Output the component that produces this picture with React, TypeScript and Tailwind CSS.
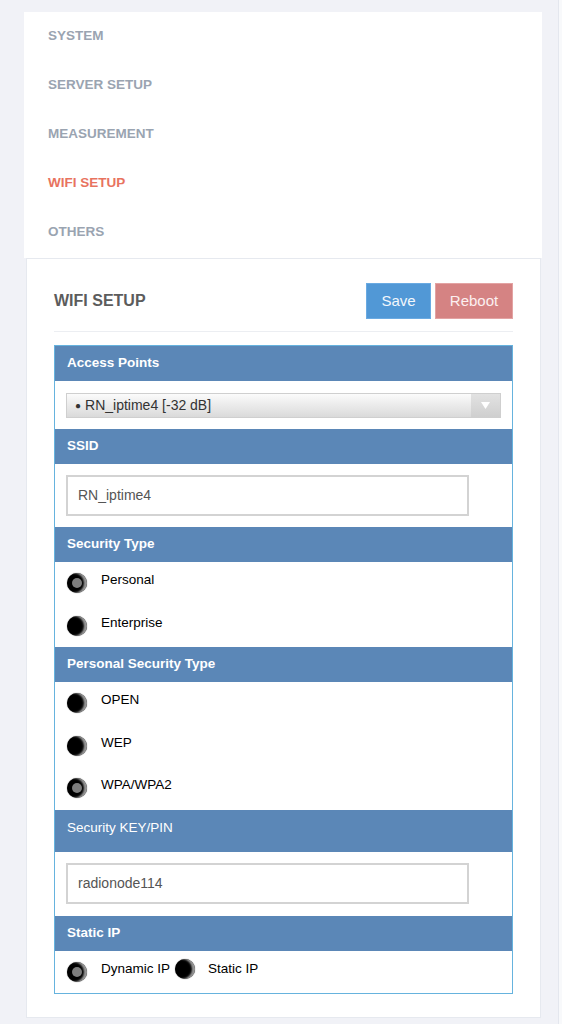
import React from 'react';

const menu = ['SYSTEM', 'SERVER SETUP', 'MEASUREMENT', 'WIFI SETUP', 'OTHERS'];

const Radio = ({ checked }: { checked?: boolean }) => (
    <span className="relative inline-block w-[20px] h-[20px] shrink-0 rounded-full bg-black shadow-[inset_-3px_0_2px_rgba(255,255,255,0.6),0_0_1px_rgba(0,0,0,0.7)]">
        {checked && <span className="absolute left-[5px] top-[5px] w-[10px] h-[10px] rounded-full bg-[#7d7d7d]" />}
    </span>
);

const Header = ({ children, light }: { children: React.ReactNode; light?: boolean }) =>
    light ? (
        <div className="h-[42px] bg-[#5b87b7] pl-[12px] pt-[8px] text-white text-[13.5px]">{children}</div>
    ) : (
        <div className="h-[35px] bg-[#5b87b7] pl-[12px] flex items-center text-white font-bold text-[13.5px]">{children}</div>
    );

const RadioRow = ({ label, checked }: { label: string; checked?: boolean }) => (
    <div className="h-[42.5px] flex items-center pl-[12px]">
        <Radio checked={checked} />
        <span className="ml-[14px] -mt-[6px] text-[13.5px] text-black">{label}</span>
    </div>
);

const TextBox = ({ value }: { value: string }) => (
    <div className="w-[403px] h-[41px] border-2 border-[#d3d3d3] bg-white flex items-center pl-[10px] text-[14px] text-[#555]">
        {value}
    </div>
);

export default function App() {
    return (
        <div className="min-h-[1024px] bg-[#f8f9fb]" style={{ fontFamily: '"Liberation Sans", Arial, sans-serif' }}>
            <div className="w-[559px] min-h-[1024px] bg-[#f1f2f7] border-r border-[#e4e7ee] pt-[12px] pl-[24px]">
                {/* Menu */}
                <div className="w-[518px] bg-white pb-[1px]">
                    {menu.map(m => (
                        <div
                            key={m}
                            className={`h-[49px] flex items-center pl-[24px] text-[13.5px] font-bold ${m === 'WIFI SETUP' ? 'text-[#e8735f]' : 'text-[#9aa4b1]'}`}
                        >
                            {m}
                        </div>
                    ))}
                </div>

                {/* WiFi setup panel */}
                <div className="ml-[2px] w-[515px] bg-white border border-[#e6e9ef] px-[27px] pt-[24px] pb-[23px]">
                    <div className="flex items-center justify-between h-[36px]">
                        <h2 className="text-[16px] font-bold text-[#5c5c5c]">WIFI SETUP</h2>
                        <div className="flex gap-[4px]">
                            <button className="w-[65px] h-[36px] bg-[#5198d6] border border-[#6aaae2] text-[15px] text-[#f2f7fc]">Save</button>
                            <button className="w-[78px] h-[36px] bg-[#d58383] border border-[#e3a3a3] text-[15px] text-[#fcf0f0]">Reboot</button>
                        </div>
                    </div>
                    <div className="mt-[12px] h-px bg-[#eceef2]" />

                    <div className="mt-[13px] border border-[#66b3de]">
                        <Header>Access Points</Header>
                        <div className="h-[48px] pt-[12px] px-[11px]">
                            <div className="relative h-[25px] border border-[#cfcfcf] bg-gradient-to-b from-[#fbfbfb] to-[#dadada] flex items-center pl-[8px] text-[14px] text-[#333]">
                                <span className="text-[10px] mr-[4px]">●</span>RN_iptime4 [-32 dB]
                                <div className="absolute right-0 top-0 bottom-0 w-[29px] bg-gradient-to-b from-[#e2e2e2] to-[#cfcfcf] flex items-center justify-center">
                                    <svg width="9" height="7" viewBox="0 0 9 7">
                                        <path d="M0 0 H9 L4.5 7 Z" fill="#ffffff" />
                                    </svg>
                                </div>
                            </div>
                        </div>

                        <Header>SSID</Header>
                        <div className="h-[63px] pt-[11px] px-[11px]">
                            <TextBox value="RN_iptime4" />
                        </div>

                        <Header>Security Type</Header>
                        <div className="h-[85px]">
                            <RadioRow label="Personal" checked />
                            <RadioRow label="Enterprise" />
                        </div>

                        <Header>Personal Security Type</Header>
                        <div className="h-[128px]">
                            <RadioRow label="OPEN" />
                            <RadioRow label="WEP" />
                            <RadioRow label="WPA/WPA2" checked />
                        </div>

                        <Header light>Security KEY/PIN</Header>
                        <div className="h-[64px] pt-[11px] px-[11px]">
                            <TextBox value="radionode114" />
                        </div>

                        <Header>Static IP</Header>
                        <div className="h-[42px] flex items-center pl-[12px]">
                            <Radio checked />
                            <span className="ml-[14px] -mt-[6px] text-[13.5px] text-black">Dynamic IP</span>
                            <span className="ml-[5px]"><Radio /></span>
                            <span className="ml-[13px] -mt-[6px] text-[13.5px] text-black">Static IP</span>
                        </div>
                    </div>
                </div>
            </div>
        </div>
    );
}
